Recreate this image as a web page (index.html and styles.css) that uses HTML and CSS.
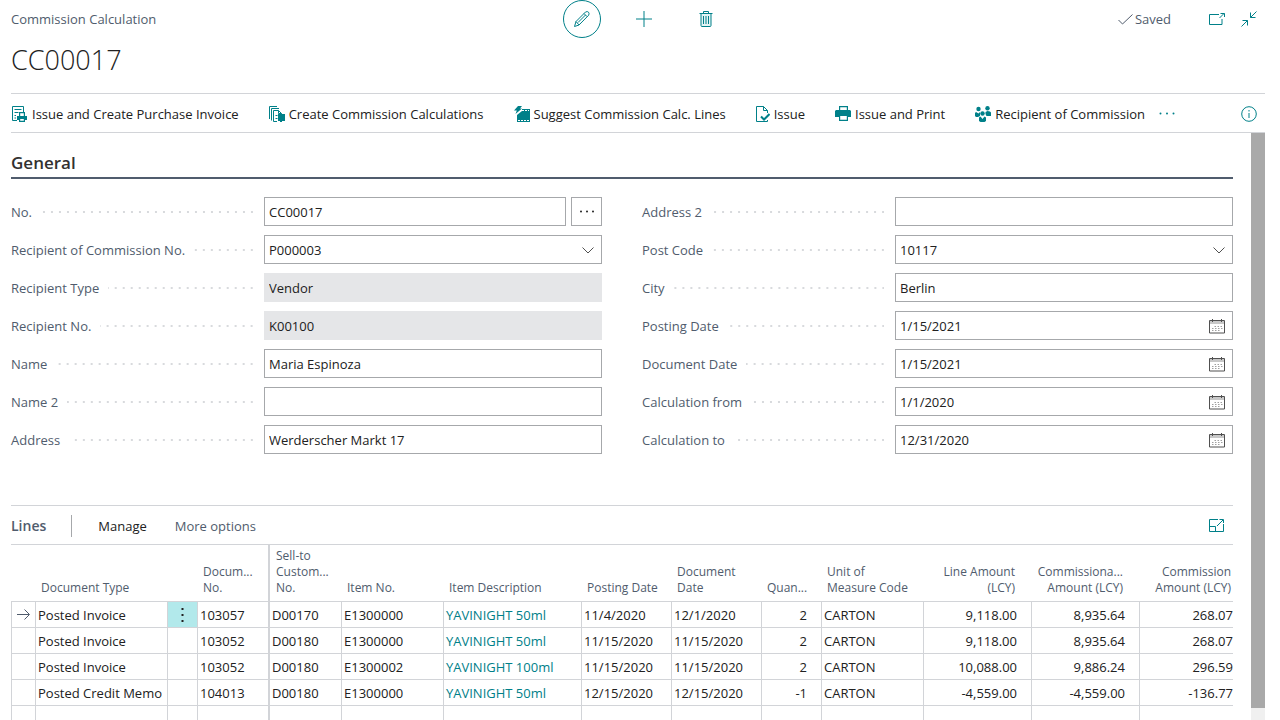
FILE: index.html
```
<!DOCTYPE html>
<html lang="en">
<head>
<meta charset="utf-8">
<title>Commission Calculation - CC00017</title>
<link rel="stylesheet" href="styles.css">
</head>

<body>
<header class="page-header">
	<div class="caption">Commission Calculation</div>
	<div class="system-actions">
		<button class="round active" aria-label="Edit">
			<svg width="18" height="18" viewBox="0 0 18 18"><path d="M1.5 16.5 3 11.5 12.5 2q2-1 3 .2t.2 3L6 15zM3 11.5 6 15M11 3.500l3.200 3.200M5 12.500 12.500 5" /></svg>
		</button>
		<button class="round" aria-label="New">
			<svg class="plus" width="16" height="16" viewBox="0 0 16 16"><path d="M8 0v16M0 8h16" /></svg>
		</button>
		<button class="round" aria-label="Delete">
			<svg width="14" height="16" viewBox="0 0 14 16"><path class="tint" d="M2 2.500v12q0 1 1 1h8q1 0 1-1v-12" /><path d="M.5 2.500h13M4.500 2V.5h5V2M4.500 5v8M7 5v8M9.500 5v8" /></svg>
		</button>
	</div>
	<div class="page-state">
		<svg class="check" width="15" height="11" viewBox="0 0 15 11"><path d="M.5 6 4.500 10 14.500.5" /></svg>
		<span>Saved</span>
		<button class="popout" aria-label="Open in new window">
			<svg width="16" height="12" viewBox="0 0 16 12"><path d="M10 1.500H.5v10h12.500V6M10.500 5 15 .5M11.500.5H15.500V4" /></svg>
		</button>
		<button aria-label="Collapse page">
			<svg width="16" height="16" viewBox="0 0 16 16"><path d="M15.500.5 9.500 6.500M9.500 1.500v5h5M.5 15.500l6-6M1.500 9.500h5v5" /></svg>
		</button>
	</div>
</header>
<h1>CC00017</h1>

<nav class="toolbar">
	<button>
		<svg width="16" height="16" viewBox="0 0 16 16"><path d="M5 14.500H.5V.5h11V6M2.500 3.500h7M2.500 6.500h4M2.500 9.500h1.500M2.500 12h1.500" /><path class="solid" d="M7 6h6v4h2v4h-2v2H7v-2H5v-4h2zm1.200 1.200V10h3.600V7.200zm0 5.800v1.800h3.600V13z" /></svg>
		Issue and Create Purchase Invoice
	</button>
	<button>
		<svg width="16" height="16" viewBox="0 0 16 16"><path d="M.5 13V.5H8M2.500 14.500v-12H10M8 15.500H4.500v-11h5l3 3V9M9.500 4.500v3h3M6.500 9.500h2M6.500 12.500h2" /><path class="solid" d="M9 8h7v7h-3v1h-2v-1H9z" /></svg>
		Create Commission Calculations
	</button>
	<button>
		<svg width="16" height="16" viewBox="0 0 16 16"><path class="solid" d="M4 0h4L6 2.500h2L1.500 8l1.300-3.500H0zM8 3h8v13H3V9l5-4z" /><path class="light" d="M8 4.500h7M4 14.500h11" stroke-dasharray="2 1" /></svg>
		Suggest Commission Calc. Lines
	</button>
	<button>
		<svg width="14" height="16" viewBox="0 0 14 16"><path d="M11.500 14v1.500H.5V.5h7l4 4V7M7.500.5v4h4" /><path class="bold" d="m5 10.500 3 3 5.500-5.500" /></svg>
		Issue
	</button>
	<button>
		<svg width="16" height="16" viewBox="0 0 16 16"><path class="solid" d="M4 0h9v4h2l1 1v6h-3v4H4v-4H0V5l1-1h3zm1.200 1.200V4h6.600V1.200zm0 8.800v3.800h6.600V10z" /></svg>
		Issue and Print
	</button>
	<button>
		<svg width="16" height="16" viewBox="0 0 16 16"><g class="solid"><circle cx="3.500" cy="3" r="2.200" /><circle cx="12.500" cy="2.200" r="2.200" /><circle cx="7.500" cy="7.500" r="2.200" /><path d="M0 10V7l1-1 2.500 1.500L5 6v4l-2 1H1zM10.500 8V6l2-1 2.500.5 1 1V10h-4.500zM4 15v-3.500l1.500-1L7.500 13l2-2.500 1.500 1V15l-1.500 1h-4z" /></g></svg>
		Recipient of Commission
	</button>
	<button class="more" aria-label="More actions">
		<svg width="16" height="3" viewBox="0 0 16 3"><g class="solid"><circle cx="1.500" cy="1.500" r="1" /><circle cx="8" cy="1.500" r="1" /><circle cx="14.500" cy="1.500" r="1" /></g></svg>
	</button>
	<button class="info" aria-label="Details">
		<svg width="16" height="16" viewBox="0 0 16 16"><circle cx="8" cy="8" r="7.300" /><path d="M8 7v5M8 4v1.500" /></svg>
	</button>
</nav>

<div class="workspace">
<main>
	<section>
		<h2>General</h2>
		<form class="fields">
			<div class="column">
				<div class="field">
					<label for="no">No.</label>
					<div class="control"><input id="no" type="text" value="CC00017"><button type="button" class="assist" aria-label="Choose number"><svg width="16" height="3" viewBox="0 0 16 3"><g class="dark-solid"><circle cx="2" cy="1.500" r="1" /><circle cx="8" cy="1.500" r="1" /><circle cx="14" cy="1.500" r="1" /></g></svg></button></div>
				</div>
				<div class="field">
					<label for="recipient">Recipient of Commission No.</label>
					<div class="control"><select id="recipient"><option>P000003</option></select><svg class="chevron" width="12" height="7" viewBox="0 0 12 7"><path d="m.5.5 5.500 5.500L11.500.5" /></svg></div>
				</div>
				<div class="field">
					<label for="rtype">Recipient Type</label>
					<div class="control"><input id="rtype" type="text" value="Vendor" readonly></div>
				</div>
				<div class="field">
					<label for="rno">Recipient No.</label>
					<div class="control"><input id="rno" type="text" value="K00100" readonly></div>
				</div>
				<div class="field">
					<label for="name">Name</label>
					<div class="control"><input id="name" type="text" value="Maria Espinoza"></div>
				</div>
				<div class="field">
					<label for="name2">Name 2</label>
					<div class="control"><input id="name2" type="text"></div>
				</div>
				<div class="field">
					<label for="address">Address</label>
					<div class="control"><input id="address" type="text" value="Werderscher Markt 17"></div>
				</div>
			</div>
			<div class="column">
				<div class="field">
					<label for="address2">Address 2</label>
					<div class="control"><input id="address2" type="text"></div>
				</div>
				<div class="field">
					<label for="post">Post Code</label>
					<div class="control"><select id="post"><option>10117</option></select><svg class="chevron" width="12" height="7" viewBox="0 0 12 7"><path d="m.5.5 5.500 5.500L11.500.5" /></svg></div>
				</div>
				<div class="field">
					<label for="city">City</label>
					<div class="control"><input id="city" type="text" value="Berlin"></div>
				</div>
				<div class="field">
					<label for="posting">Posting Date</label>
					<div class="control"><input id="posting" type="text" value="1/15/2021"><button type="button" class="calendar" aria-label="Pick posting date"><svg width="16" height="15" viewBox="0 0 16 15"><use href="#cal" /></svg></button></div>
				</div>
				<div class="field">
					<label for="docdate">Document Date</label>
					<div class="control"><input id="docdate" type="text" value="1/15/2021"><button type="button" class="calendar" aria-label="Pick document date"><svg width="16" height="15" viewBox="0 0 16 15"><use href="#cal" /></svg></button></div>
				</div>
				<div class="field">
					<label for="from">Calculation from</label>
					<div class="control"><input id="from" type="text" value="1/1/2020"><button type="button" class="calendar" aria-label="Pick start date"><svg width="16" height="15" viewBox="0 0 16 15"><use href="#cal" /></svg></button></div>
				</div>
				<div class="field">
					<label for="to">Calculation to</label>
					<div class="control"><input id="to" type="text" value="12/31/2020"><button type="button" class="calendar" aria-label="Pick end date"><svg width="16" height="15" viewBox="0 0 16 15"><use href="#cal" /></svg></button></div>
				</div>
			</div>
		</form>
	</section>

	<section>
		<div class="lines-bar">
			<h3>Lines</h3>
			<button class="strong">Manage</button>
			<button>More options</button>
			<button class="expand" aria-label="Expand lines">
				<svg width="15" height="13" viewBox="0 0 15 13"><path d="M9 .5H.5v12h14V5M.5 7.500h6v5M8 7 14 1M10.500.5h4V4" /></svg>
			</button>
		</div>
		<table class="lines">
			<colgroup>
				<col class="w-mark"><col class="w-type"><col class="w-menu"><col class="w-docno"><col class="w-cust"><col class="w-item"><col class="w-desc"><col class="w-date"><col class="w-date"><col class="w-qty"><col class="w-item"><col class="w-amount"><col class="w-amount"><col>
			</colgroup>
			<thead>
				<tr>
					<th></th>
					<th>Document Type</th>
					<th></th>
					<th>Docum...<br>No.</th>
					<th class="freeze">Sell-to<br>Custom...<br>No.</th>
					<th>Item No.</th>
					<th>Item Description</th>
					<th>Posting Date</th>
					<th>Document<br>Date</th>
					<th>Quan...</th>
					<th>Unit of<br>Measure Code</th>
					<th class="num">Line Amount<br>(LCY)</th>
					<th class="num">Commissiona...<br>Amount (LCY)</th>
					<th class="num">Commission<br>Amount (LCY)</th>
				</tr>
			</thead>
			<tbody>
				<tr>
					<td class="mark"><svg width="13" height="11" viewBox="0 0 13 11"><path d="M0 5.500h12M7.500.5l5 5-5 5" /></svg></td>
					<td>Posted Invoice</td>
					<td class="menu"><button aria-label="Row options"><svg width="3" height="15" viewBox="0 0 3 15"><path class="dark-solid" d="M.5 1h2v2h-2zM.5 7h2v2h-2zM.5 13h2v2h-2z" /></svg></button></td>
					<td>103057</td>
					<td class="freeze">D00170</td>
					<td>E1300000</td>
					<td><a href="#">YAVINIGHT 50ml</a></td>
					<td>11/4/2020</td>
					<td>12/1/2020</td>
					<td class="num">2</td>
					<td>CARTON</td>
					<td class="num">9,118.00</td>
					<td class="num">8,935.64</td>
					<td class="num">268.07</td>
				</tr>
				<tr>
					<td></td>
					<td>Posted Invoice</td>
					<td></td>
					<td>103052</td>
					<td class="freeze">D00180</td>
					<td>E1300000</td>
					<td><a href="#">YAVINIGHT 50ml</a></td>
					<td>11/15/2020</td>
					<td>11/15/2020</td>
					<td class="num">2</td>
					<td>CARTON</td>
					<td class="num">9,118.00</td>
					<td class="num">8,935.64</td>
					<td class="num">268.07</td>
				</tr>
				<tr>
					<td></td>
					<td>Posted Invoice</td>
					<td></td>
					<td>103052</td>
					<td class="freeze">D00180</td>
					<td>E1300002</td>
					<td><a href="#">YAVINIGHT 100ml</a></td>
					<td>11/15/2020</td>
					<td>11/15/2020</td>
					<td class="num">2</td>
					<td>CARTON</td>
					<td class="num">10,088.00</td>
					<td class="num">9,886.24</td>
					<td class="num">296.59</td>
				</tr>
				<tr>
					<td></td>
					<td>Posted Credit Memo</td>
					<td></td>
					<td>104013</td>
					<td class="freeze">D00180</td>
					<td>E1300000</td>
					<td><a href="#">YAVINIGHT 50ml</a></td>
					<td>12/15/2020</td>
					<td>12/15/2020</td>
					<td class="num">-1</td>
					<td>CARTON</td>
					<td class="num">-4,559.00</td>
					<td class="num">-4,559.00</td>
					<td class="num">-136.77</td>
				</tr>
				<tr>
					<td></td><td></td><td></td><td></td><td class="freeze"></td><td></td><td></td><td></td><td></td><td></td><td></td><td></td><td></td><td></td>
				</tr>
			</tbody>
		</table>
	</section>
</main>
<div class="scrollbar"><div class="thumb"></div></div>
</div>

<!-- shared calendar icon -->
<svg class="defs" width="0" height="0">
	<symbol id="cal" viewBox="0 0 16 15">
		<path class="cal-head" d="M1 2h14v3H1z" />
		<path class="cal-line" d="M.5 1.500h15v12.500H.5zM3.500 0v3M12.500 0v3" />
		<path class="cal-days" d="M5.500 7.500h8M3 9.500h10.500M3 11.500h8" stroke-dasharray="1.500 1.500" />
	</symbol>
</svg>
</body>
</html>
```
FILE: styles.css
```
* { box-sizing: border-box; }
body { margin: 0; height: 100vh; overflow: hidden; display: flex; flex-direction: column; background: white; color: #212121; font-family: "Open Sans", "Noto Sans", sans-serif; font-size: 13px; line-height: 18px; }
button, input, select { font: inherit; color: inherit; }
button { background: none; border: none; padding: 0; display: inline-flex; align-items: center; justify-content: center; white-space: nowrap; }
svg { display: block; flex: none; fill: none; stroke: #008089; }
.solid { fill: #008089; stroke: none; }
.dark-solid { fill: #212121; stroke: none; }
.tint { fill: #e3f4f5; }
.light { stroke: white; }
.bold { stroke-width: 2; }
.defs { position: absolute; }

.page-header { display: grid; grid-template-columns: 1fr auto 1fr; align-items: center; height: 38px; padding: 0 3px 0 11px; color: #505c6d; }
.system-actions { display: flex; gap: 24px; }
.round { width: 38px; height: 38px; border-radius: 50%; }
.active { border: 1px solid #008089; }
.page-state { display: flex; align-items: center; justify-content: flex-end; padding-right: 20px; }
.page-state .check { stroke: #505c6d; margin-right: 2px; }
.popout { margin: 0 16px 0 38px; }
h1 { margin: 0; padding: 0 11px; height: 55px; font-size: 27px; font-weight: 300; line-height: 44px; }

.toolbar { display: flex; align-items: center; gap: 30px; height: 40px; margin: 0 15px 0 11px; padding: 1px 8px 0 1px; border-top: 1px solid #d2d4d8; border-bottom: 1px solid #d2d4d8; }
.toolbar button { gap: 4px; }
.toolbar .more { margin-left: -16px; }
.toolbar .info { margin-left: auto; }

.workspace { flex: 1; min-height: 0; display: flex; margin-right: 15px; }
main { flex: 1; min-width: 0; overflow: hidden; padding: 0 18px 0 11px; }
.scrollbar { width: 14px; background: #f0f0f0; }
.thumb { height: 98%; background: #a9a9a9; }

h2 { margin: 0 0 18px; padding-top: 18px; height: 46px; border-bottom: 2px solid #505c6d; font-size: 17px; font-weight: 600; line-height: 24px; color: #323130; }
.fields { display: flex; gap: 40px; margin-bottom: 51px; }
.column { flex: 1; min-width: 0; display: flex; flex-direction: column; gap: 9px; }
.field { display: flex; }
.field label { width: 253px; flex: none; display: flex; align-items: center; gap: 9px; padding-right: 11px; color: #505c6d; white-space: nowrap; }
.field label::after { content: ""; flex: 1; height: 2px; background: linear-gradient(to left, #d8dadd 2px, transparent 2px) right / 8px 2px repeat-x; }
.control { flex: 1; min-width: 0; position: relative; display: flex; gap: 5px; }
.control input, .control select { flex: 1; min-width: 0; width: 100%; height: 29px; padding: 0 4px; border: 1px solid #a6a8ab; border-radius: 0; background: white; appearance: none; }
.control input:read-only { background: #e5e6e8; border-color: #e5e6e8; }
.assist { width: 31px; border: 1px solid #a6a8ab; }
.chevron { position: absolute; right: 8px; top: 12px; stroke: #505050; pointer-events: none; }
.calendar { position: absolute; right: 8px; top: 8px; }
.cal-head { fill: #c8c8c8; stroke: none; }
.cal-line { stroke: #505050; }
.cal-days { stroke: #a0a0a0; }

.lines-bar { display: flex; align-items: center; height: 40px; padding-top: 1px; border-top: 1px solid #d2d4d8; border-bottom: 1px solid #d2d4d8; color: #505c6d; }
.lines-bar h3 { margin: 0 26px 0 0; padding-right: 25px; border-right: 1px solid #a6a8ab; font-size: 14px; font-weight: 600; line-height: 22px; }
.lines-bar button { margin-right: 28px; }
.lines-bar .strong { color: #212121; }
.lines-bar .expand { margin: 0 9px 0 auto; }

.lines { width: 100%; table-layout: fixed; border-collapse: separate; border-spacing: 0; }
.w-mark { width: 24px; }
.w-type { width: 132px; }
.w-menu { width: 30px; }
.w-docno { width: 71px; }
.w-cust { width: 73px; }
.w-item { width: 102px; }
.w-desc { width: 138px; }
.w-date { width: 90px; }
.w-qty { width: 60px; }
.w-amount { width: 108px; }
.lines th { height: 57px; padding: 0 0 5px 6px; border-bottom: 1px solid #d2d4d8; vertical-align: bottom; text-align: left; white-space: nowrap; font-size: 12px; font-weight: normal; line-height: 16px; color: #505c6d; }
.lines td { height: 26px; padding: 0 0 0 2px; border-left: 1px solid #d2d4d8; border-bottom: 1px solid #d2d4d8; white-space: nowrap; }
.lines .freeze { border-left: 2px solid #d2d4d8; }
.lines .num { text-align: right; padding-right: 14px; }
.lines th.num { padding-right: 16px; }
.lines td.num:last-child { padding-right: 0; }
.lines th.num:last-child { padding-right: 2px; }
.lines a { color: #008089; text-decoration: none; }
.lines .mark { padding-left: 5px; }
.mark svg { stroke: #505c6d; }
.lines .menu { padding: 0; background: #b2e9eb; }
.menu button { width: 100%; height: 25px; }
```
